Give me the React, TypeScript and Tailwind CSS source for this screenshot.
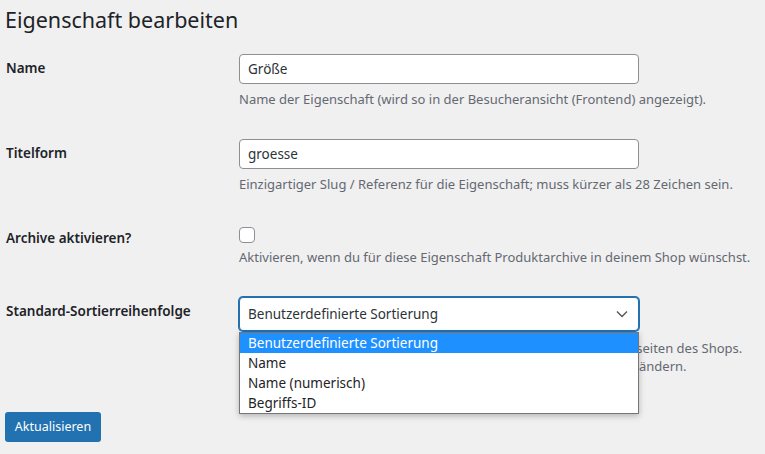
import React from 'react'

const font = { fontFamily: '"Noto Sans", "Open Sans", sans-serif' }

function Row({ label, children }: { label: string; children: React.ReactNode }) {
  return (
    <div className="grid grid-cols-[234px_1fr]">
      <div className="pl-[1px] pt-[20px] pb-[20px] text-[13.5px] leading-[18px] font-semibold text-[#1d2327]">{label}</div>
      <div className="py-[15px]">{children}</div>
    </div>
  )
}

export default function App() {
  return (
    <div className="w-[765px] h-[454px] overflow-hidden bg-[#f0f0f1] pl-[5px] text-[#1d2327]" style={font}>
      <h1 className="pt-[5px] text-[21.5px] leading-[30px] font-normal">Eigenschaft bearbeiten</h1>

      <div className="mt-[4px]">
        <Row label="Name">
          <input
            defaultValue="Größe"
            className="block w-[400px] h-[30px] px-[8px] rounded-[4px] border border-[#8c8f94] bg-white text-[13.5px] text-[#2c3338] outline-none"
          />
          <p className="mt-[5px] text-[13px] leading-[20px] text-[#646970] whitespace-nowrap">
            Name der Eigenschaft (wird so in der Besucheransicht (Frontend) angezeigt).
          </p>
        </Row>

        <Row label="Titelform">
          <input
            defaultValue="groesse"
            className="block w-[400px] h-[30px] px-[8px] rounded-[4px] border border-[#8c8f94] bg-white text-[13.5px] text-[#2c3338] outline-none"
          />
          <p className="mt-[5px] text-[13px] leading-[20px] text-[#646970] whitespace-nowrap">
            Einzigartiger Slug / Referenz für die Eigenschaft; muss kürzer als 28 Zeichen sein.
          </p>
        </Row>

        <Row label="Archive aktivieren?">
          <div className="mt-[3px] w-[16px] h-[16px] rounded-[4px] border border-[#8c8f94] bg-white" />
          <p className="mt-[4px] text-[13px] leading-[20px] text-[#646970] whitespace-nowrap">
            Aktivieren, wenn du für diese Eigenschaft Produktarchive in deinem Shop wünschst.
          </p>
        </Row>

        <div className="grid grid-cols-[234px_1fr]">
          <div className="pl-[1px] pt-[20px] text-[13.5px] leading-[18px] font-semibold">Standard-Sortierreihenfolge</div>
          <div className="relative pt-[15px]">
            <div className="flex items-center justify-between w-[400px] h-[34px] pl-[8px] pr-[10px] rounded-[4px] border border-[#2271b1] shadow-[0_0_0_1px_#2271b1] bg-white text-[13.5px] text-[#2c3338]">
              <span>Benutzerdefinierte Sortierung</span>
              <svg width="12" height="8" viewBox="0 0 12 8" fill="none">
                <path d="M1 1.5l5 5 5-5" stroke="#50575e" strokeWidth="1.4" />
              </svg>
            </div>
            <div className="mt-[8px] text-[13px] leading-[18px] text-[#646970] whitespace-nowrap">
              <div>Bestimmt die Sortierreihenfolge aller Begriffe auf all den Produktseiten des Shops.</div>
              <div>Bei benutzerdefinierter Sortierung kannst du die Reihenfolge frei ändern.</div>
            </div>

            <ul className="absolute left-0 top-[50px] w-[400px] border border-[#767676] bg-white text-[13.5px] leading-[20px] text-[#1d2327] shadow-[0_2px_6px_rgba(0,0,0,0.25)]">
              <li className="pl-[8px] bg-[#1e90ff] text-white">Benutzerdefinierte Sortierung</li>
              <li className="pl-[8px]">Name</li>
              <li className="pl-[8px]">Name (numerisch)</li>
              <li className="pl-[8px]">Begriffs-ID</li>
            </ul>
          </div>
        </div>

        <button className="mt-[37px] h-[30px] w-[96px] rounded-[3px] bg-[#2271b1] text-white text-[12.5px] leading-[28px]">
          Aktualisieren
        </button>
      </div>
    </div>
  )
}
